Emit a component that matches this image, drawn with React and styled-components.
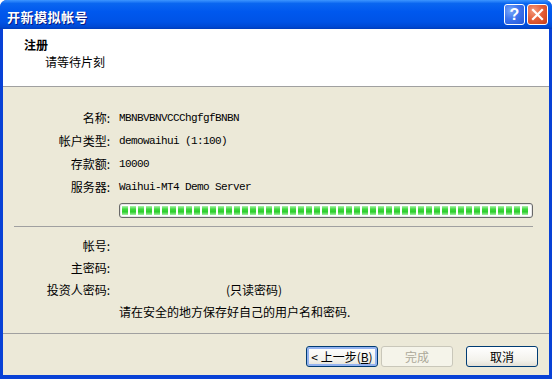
import React from "react";
import styled, { createGlobalStyle } from "styled-components";

const GlobalStyle = createGlobalStyle`
    html, body {
        margin: 0;
        padding: 0;
        background: #fff;
    }
    body {
        font-family: "Noto Sans CJK SC", "Liberation Sans", sans-serif;
        font-size: 12px;
        color: #000;
    }
`;

/* 窗口 */
const Window = styled.div`
    width: 552px;
    height: 379px;
    display: flex;
    flex-direction: column;
    box-sizing: border-box;
    background: #0841d6;
    border-radius: 7px 7px 0 0;
    overflow: hidden;
`;

const TitleBar = styled.div`
    height: 29px;
    flex: none;
    display: flex;
    align-items: center;
    padding: 0 4px 0 7px;
    box-sizing: border-box;
    background: linear-gradient(180deg, #3d95ff 0%, #0a66f0 12%, #0058ee 40%, #0053e6 75%, #0049d4 92%, #003dbb 100%);
`;

const Title = styled.div`
    flex: 1;
    padding-top: 3px;
    color: #fff;
    font-size: 13px;
    font-weight: bold;
    letter-spacing: 0.5px;
    text-shadow: 1px 1px 0 #0a1a80;
`;

const CaptionButton = styled.div`
    width: 21px;
    height: 21px;
    margin-left: ${props => props.$gap || 0}px;
    box-sizing: border-box;
    border: 1px solid #fff;
    border-radius: 3px;
    display: flex;
    align-items: center;
    justify-content: center;
    color: #fff;
    font-family: "Liberation Sans", sans-serif;
    font-weight: bold;
    font-size: 16px;
    background: ${props => props.$danger
        ? "radial-gradient(circle at 30% 30%, #f39a7d 0%, #e5613b 45%, #c83c17 100%)"
        : "radial-gradient(circle at 30% 30%, #7aa8f8 0%, #3e74ee 45%, #2357d8 100%)"};
`;

const Client = styled.div`
    flex: 1;
    display: flex;
    flex-direction: column;
    margin: 0 3px 4px 3px;
    background: #ece9d8;
`;

const Header = styled.div`
    height: 58px;
    flex: none;
    box-sizing: border-box;
    background: #fff;
    border-bottom: 1px solid #a0a0a0;
    padding: 8px 0 0 21px;
`;

const HeaderTitle = styled.div`
    font-weight: bold;
    line-height: 16px;
`;

const HeaderSub = styled.div`
    padding-left: 21px;
    line-height: 18px;
`;

const Body = styled.div`
    padding: 19px 16px 0 0;
`;

const Form = styled.div`
    display: grid;
    grid-template-columns: 107px 1fr;
    column-gap: 9px;
    grid-auto-rows: ${props => props.$row}px;
    align-items: center;
`;

const Label = styled.div`
    text-align: right;
    white-space: nowrap;
`;

const Value = styled.div`
    font-family: "Liberation Mono", monospace;
    font-size: 11px;
    letter-spacing: -0.6px;
    white-space: nowrap;
`;

const Text = styled.div`
    grid-column: ${props => (props.$wide ? "2" : "auto")};
    white-space: nowrap;
`;

const Hint = styled.span`
    margin-left: 107px;
`;

const Progress = styled.div`
    grid-column: 2;
    align-self: start;
    height: 15px;
    margin-top: 5px;
    box-sizing: border-box;
    border: 1px solid #686868;
    border-radius: 3px;
    background: #fff;
    padding: 2px;
    box-shadow: inset 0 0 0 1px #e8e8e8;
`;

const Blocks = styled.div`
    height: 100%;
    background:
        repeating-linear-gradient(90deg, transparent 0 6px, #fff 6px 8px),
        linear-gradient(180deg, #aef2ae 0%, #3ed83e 35%, #2ccf2c 65%, #a4eea4 100%);
`;

const Separator = styled.div`
    height: 1px;
    flex: none;
    background: #a0a0a0;
    margin: ${props => props.$margin};
`;

const Footer = styled.div`
    display: flex;
    justify-content: flex-end;
    padding: 12px 11px 0 0;
`;

const Button = styled.div`
    width: 72px;
    height: 21px;
    margin-left: ${props => props.$gap}px;
    box-sizing: border-box;
    display: flex;
    align-items: center;
    justify-content: center;
    border-radius: 3px;
    border: 1px solid ${props => (props.disabled ? "#c9c7ba" : "#003c74")};
    color: ${props => (props.disabled ? "#aca899" : "#000")};
    background: ${props => props.disabled
        ? "#f5f4ea"
        : "linear-gradient(180deg, #ffffff 0%, #f3f2ec 70%, #e3e0d6 100%)"};
    box-shadow: ${props => (props.$focus ? "inset 0 0 0 2px #94b3f0" : "none")};
    white-space: pre;
    u {
        text-decoration: underline;
    }
`;

const CloseIcon = () => (
    <svg width="13" height="13" viewBox="0 0 13 13">
        <path d="M2 2 L11 11 M11 2 L2 11" stroke="#fff" strokeWidth="2.2" strokeLinecap="square" />
    </svg>
);

const info = [
    ["名称:", "MBNBVBNVCCChgfgfBNBN"],
    ["帐户类型:", "demowaihui (1:100)"],
    ["存款额:", "10000"],
    ["服务器:", "Waihui-MT4 Demo Server"]
];

export default function App() {
    return <>
        <GlobalStyle />
        <Window>
            <TitleBar>
                <Title>开新模拟帐号</Title>
                <CaptionButton>?</CaptionButton>
                <CaptionButton $danger $gap={2}><CloseIcon /></CaptionButton>
            </TitleBar>
            <Client>
                <Header>
                    <HeaderTitle>注册</HeaderTitle>
                    <HeaderSub>请等待片刻</HeaderSub>
                </Header>
                <Body>
                    <Form $row={23}>
                        {info.map(([k, v]) => <React.Fragment key={k}>
                            <Label>{k}</Label>
                            <Value>{v}</Value>
                        </React.Fragment>)}
                        <Progress><Blocks /></Progress>
                    </Form>
                    <Separator $margin="5px 0 7px 11px" />
                    <Form $row={22}>
                        <Label>帐号:</Label>
                        <Text />
                        <Label>主密码:</Label>
                        <Text />
                        <Label>投资人密码:</Label>
                        <Text><Hint>(只读密码)</Hint></Text>
                        <Text $wide>请在安全的地方保存好自己的用户名和密码.</Text>
                    </Form>
                </Body>
                <Separator $margin="11px 0 0 0" />
                <Footer>
                    <Button $focus $gap={0}>{"< 上一步("}<u>B</u>)</Button>
                    <Button disabled $gap={3}>完成</Button>
                    <Button $gap={13}>取消</Button>
                </Footer>
            </Client>
        </Window>
    </>;
}
